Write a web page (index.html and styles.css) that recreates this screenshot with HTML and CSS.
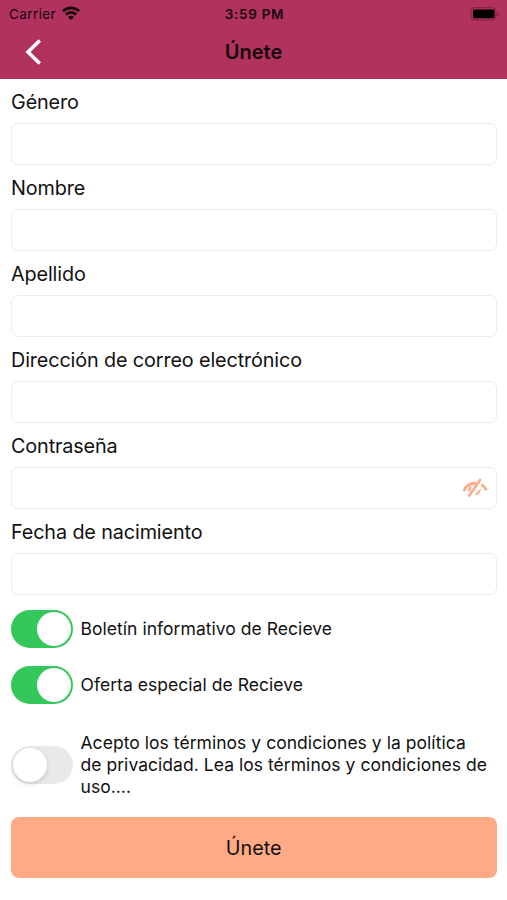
FILE: index.html
```
<!DOCTYPE html>
<html lang="es">
<head>
    <meta charset="utf-8">
    <title>Únete</title>
    <link rel="stylesheet" href="styles.css">
</head>
<body>
    <header>
        <div class="status">
            <div class="carrier">
                <span>Carrier</span>
                <svg width="18" height="14" viewBox="0 0 18 14" fill="none" stroke="#16060c" stroke-width="2.6">
                    <path d="M1 5.2a11.3 11.3 0 0 1 16 0"/>
                    <path d="M3.8 8.6a7.2 7.2 0 0 1 10.4 0"/>
                    <path d="M9 14L6 11a4.2 4.2 0 0 1 6 0z" fill="#16060c" stroke="none"/>
                </svg>
            </div>
            <span class="time">3:59 PM</span>
            <svg class="battery" width="30" height="14" viewBox="0 0 30 14">
                <rect x="1" y=".7" width="25" height="12.2" rx="3.5" fill="none" stroke="#7d1e40"/>
                <rect x="3" y="2.5" width="21.5" height="8.8" rx="1.5" fill="#000"/>
                <path d="M27.5 5v4q1.6-.6 1.6-2t-1.6-2z" fill="#7d1e40"/>
            </svg>
        </div>
        <div class="navbar">
            <svg class="back" width="18" height="26" viewBox="0 0 18 26" fill="none" stroke="#fff" stroke-width="3.6">
                <path d="M15.8 1.5L4 13l11.8 11.5"/>
            </svg>
            <h1>Únete</h1>
        </div>
    </header>

    <form>
        <label for="genero">Género</label>
        <div class="field"><input type="text" id="genero"></div>
        <label for="nombre">Nombre</label>
        <div class="field"><input type="text" id="nombre"></div>
        <label for="apellido">Apellido</label>
        <div class="field"><input type="text" id="apellido"></div>
        <label for="correo">Dirección de correo electrónico</label>
        <div class="field"><input type="text" id="correo"></div>
        <label for="clave">Contraseña</label>
        <div class="field">
            <input type="password" id="clave">
            <svg width="26" height="20" viewBox="0 0 26 20" fill="none" stroke="#ffaa85" stroke-width="2.8">
                <path d="M2 13C3.6 7.8 8.4 4.8 14.3 5.2"/>
                <path d="M19.4 6.8c2.3 1.2 4 3 5.2 5.6"/>
                <path d="M18.8 1L6.6 18.5" stroke-width="2.5"/>
                <path d="M8.4 8.4L7 13.2" stroke-width="2.6"/>
                <path d="M18.6 10.6c.4 3.8-1.8 6.6-5.8 6.7z" fill="#ffaa85" stroke="none"/>
            </svg>
        </div>
        <label for="fecha">Fecha de nacimiento</label>
        <div class="field"><input type="text" id="fecha"></div>

        <div class="option">
            <span class="switch on"></span>
            <p>Boletín informativo de Recieve</p>
        </div>
        <div class="option">
            <span class="switch on"></span>
            <p>Oferta especial de Recieve</p>
        </div>
        <div class="option terms">
            <span class="switch"></span>
            <p>Acepto los términos y condiciones y la política<br>de privacidad. Lea los términos y condiciones de<br>uso....</p>
        </div>
        <button type="button">Únete</button>
    </form>
</body>
</html>
```
FILE: styles.css
```
*{
    box-sizing:border-box;
}
body{
    margin:0;
    background-color:#fff;
    color:#111;
    font-family:Inter, "Liberation Sans", sans-serif;
}
header{
    height:79px;
    background-color:#b2325f;
    color:#16060c;
}
.status{
    display:grid;
    grid-template-columns:1fr auto 1fr;
    align-items:center;
    height:27px;
    padding:0 7px 0 9px;
    font-size:13.5px;
    letter-spacing:.4px;
}
.carrier{
    display:flex;
    align-items:center;
    gap:6px;
}
.carrier svg{
    margin-top:-2px;
}
.time{
    font-weight:600;
    letter-spacing:.7px;
}
.battery{
    justify-self:end;
}
.navbar{
    display:grid;
    grid-template-columns:1fr auto 1fr;
    align-items:center;
    height:50px;
}
.back{
    margin-left:24px;
}
h1{
    margin:0;
    font-size:20px;
    line-height:24px;
    font-weight:600;
}
form{
    padding:0 10px 0 10.5px;
}
label{
    display:block;
    height:44px;
    padding-left:.5px;
    font-size:19.8px;
    line-height:46px;
    letter-spacing:-.12px;
}
.field{
    display:flex;
    align-items:center;
    height:42px;
    padding-right:8px;
    border:1px solid #ececec;
    border-radius:7px;
}
.field input{
    flex:1;
    height:100%;
    border:none;
    outline:none;
    background:none;
    font:inherit;
}
.option{
    display:flex;
    align-items:center;
    gap:8px;
    height:56px;
}
.field + .option{
    margin-top:5.5px;
}
.option p{
    margin:0;
    padding-top:1px;
    font-size:17.5px;
    line-height:22px;
    letter-spacing:.04px;
    white-space:nowrap;
}
.switch{
    flex:none;
    width:62px;
    height:38px;
    padding:2px;
    border-radius:19px;
    background-color:#e9e9eb;
}
.switch::before{
    content:"";
    display:block;
    width:34px;
    height:34px;
    border-radius:50%;
    background-color:#fff;
    box-shadow:0 2px 5px rgba(0,0,0,.15);
}
.switch.on{
    background-color:#34c759;
}
.switch.on::before{
    margin-left:auto;
    box-shadow:none;
}
.terms{
    height:104.5px;
}
button{
    display:block;
    width:100%;
    height:61px;
    border:none;
    border-radius:8px;
    background-color:#ffaa85;
    color:#111;
    font-family:inherit;
    font-size:19.8px;
}
```
